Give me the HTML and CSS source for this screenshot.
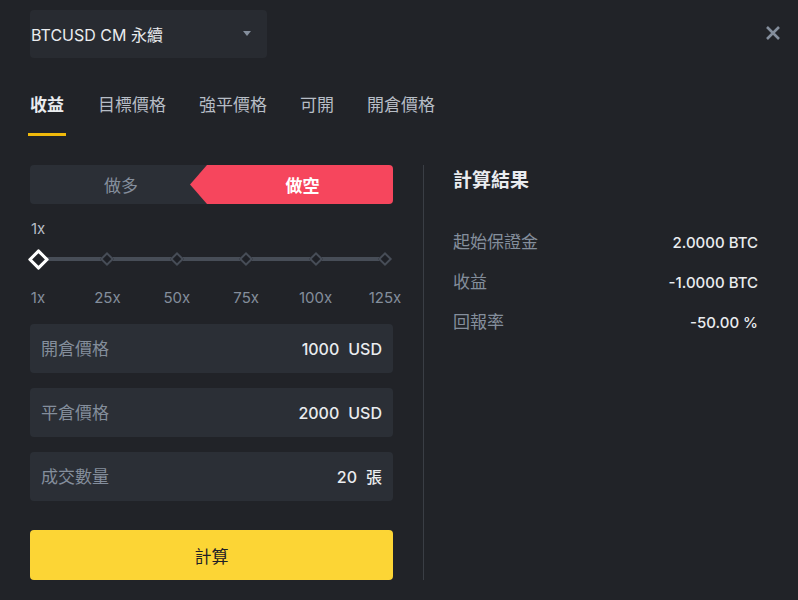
FILE: index.html
```html
<!DOCTYPE html>
<html lang="zh-Hant">

<head>
  <meta charset="UTF-8">
  <title>合約計算器</title>
  <link rel="stylesheet" href="styles.css">
</head>

<body>
  <div class="calc">
    <div class="header">
      <div class="symbol">
        <span>BTCUSD CM 永續</span>
        <span class="caret"></span>
      </div>
      <svg class="close" width="16" height="16" viewBox="0 0 16 16">
        <path d="M2 2L14 14M14 2L2 14" stroke="#848e9c" stroke-width="2.6" stroke-linecap="butt" />
      </svg>
    </div>

    <div class="tabs">
      <div class="tab active">收益</div>
      <div class="tab">目標價格</div>
      <div class="tab">強平價格</div>
      <div class="tab">可開</div>
      <div class="tab">開倉價格</div>
    </div>

    <div class="main">
      <div class="form">
        <div class="side">
          <div class="side-btn long">做多</div>
          <div class="side-btn short">做空</div>
        </div>

        <div class="lev-value">1x</div>
        <div class="slider">
          <span class="dot current"></span>
          <span class="dot"></span>
          <span class="dot"></span>
          <span class="dot"></span>
          <span class="dot"></span>
          <span class="dot"></span>
        </div>
        <div class="marks">
          <span>1x</span>
          <span>25x</span>
          <span>50x</span>
          <span>75x</span>
          <span>100x</span>
          <span>125x</span>
        </div>

        <div class="field">
          <span class="field-label">開倉價格</span>
          <span class="field-value">1000<span class="unit">USD</span></span>
        </div>
        <div class="field">
          <span class="field-label">平倉價格</span>
          <span class="field-value">2000<span class="unit">USD</span></span>
        </div>
        <div class="field">
          <span class="field-label">成交數量</span>
          <span class="field-value">20<span class="unit">張</span></span>
        </div>

        <button class="submit">計算</button>
      </div>

      <div class="divider"></div>

      <div class="result">
        <div class="result-title">計算結果</div>
        <div class="row">
          <span class="row-label">起始保證金</span>
          <span class="row-value">2.0000 BTC</span>
        </div>
        <div class="row">
          <span class="row-label">收益</span>
          <span class="row-value">-1.0000 BTC</span>
        </div>
        <div class="row">
          <span class="row-label">回報率</span>
          <span class="row-value">-50.00 %</span>
        </div>
      </div>
    </div>
  </div>
</body>

</html>
```

FILE: styles.css
```css
body {
  margin: 0;
  background: #212328;
  color: #eaecef;
  font-family: "Inter", "Noto Sans CJK TC", sans-serif;
  font-size: 16px;
}

.calc {
  padding: 10px 17px 0 30px;
}

.header {
  display: flex;
  justify-content: space-between;
  align-items: center;
}

.symbol {
  width: 237px;
  height: 48px;
  box-sizing: border-box;
  display: flex;
  align-items: center;
  justify-content: space-between;
  padding: 0 16px 0 1px;
  background: #282b31;
  border-radius: 4px;
  font-size: 16px;
  color: #eaecef;
}

.caret {
  width: 0;
  height: 0;
  border-left: 4px solid transparent;
  border-right: 4px solid transparent;
  border-top: 5px solid #848e9c;
  margin-top: -2px;
}

.close {
  margin-top: -2px;
}

.tabs {
  display: flex;
  gap: 33px;
  margin-top: 30px;
}

.tab {
  padding: 5px 0 16px;
  color: #b7bdc6;
  font-size: 17px;
  line-height: 24px;
  border-bottom: 3px solid transparent;
}

.tab.active {
  color: #eaecef;
  font-weight: 700;
  border-bottom-color: #f0b90b;
  margin: 0 -1px 0 -2px;
  padding-left: 2px;
  padding-right: 2px;
}

.main {
  display: flex;
  margin-top: 29px;
}

.form {
  width: 363px;
}

.side {
  display: flex;
  height: 39px;
}

.side-btn {
  display: flex;
  align-items: center;
  justify-content: center;
  font-size: 17px;
}

.long {
  flex: 0 0 182px;
  background: #2b2f36;
  color: #848e9c;
  border-radius: 4px 0 0 4px;
}

.short {
  flex: 1;
  margin-left: -22px;
  padding-left: 22px;
  background: #f6465d;
  color: #fff;
  font-weight: 700;
  border-radius: 0 4px 4px 0;
  clip-path: polygon(0 50%, 17px 0, 100% 0, 100% 100%, 17px 100%);
}

.lev-value {
  margin-top: 15px;
  padding-left: 1px;
  font-size: 15px;
  color: #b7bdc6;
  line-height: 20px;
}

.slider {
  display: flex;
  justify-content: space-between;
  align-items: center;
  height: 20px;
  margin-top: 10px;
  background: linear-gradient(#474d57, #474d57) center / calc(100% - 16px) 4px no-repeat;
}

.dot {
  width: 16px;
  height: 16px;
  display: flex;
  align-items: center;
  justify-content: center;
}

.dot::after {
  content: "";
  width: 6px;
  height: 6px;
  background: #1e2026;
  border: 2px solid #474d57;
  transform: rotate(45deg);
}

.dot.current::after {
  width: 9px;
  height: 9px;
  border: 3px solid #fff;
  background: #212328;
  border-radius: 1px;
}

.marks {
  display: flex;
  justify-content: space-between;
  margin-top: 19px;
  font-size: 15px;
  color: #848e9c;
  line-height: 20px;
}

.marks span {
  width: 16px;
  display: flex;
  justify-content: center;
  white-space: nowrap;
}

.field {
  display: flex;
  justify-content: space-between;
  align-items: center;
  height: 49px;
  margin-top: 15px;
  padding: 0 11px;
  background: #2b2f36;
  border-radius: 4px;
  line-height: 24px;
}

.marks + .field {
  margin-top: 16px;
}

.field-label {
  color: #848e9c;
  font-size: 17px;
}

.field-value {
  color: #eaecef;
  font-weight: 500;
}

.unit {
  margin-left: 9px;
}

.submit {
  display: block;
  width: 100%;
  height: 50px;
  margin-top: 29px;
  border: none;
  border-radius: 4px;
  background: #fcd535;
  color: #1e2026;
  font-family: inherit;
  font-size: 17px;
}

.divider {
  width: 1px;
  margin: 0 29px 0 30px;
  background: #3a3e45;
}

.result {
  width: 305px;
}

.result-title {
  font-size: 19px;
  font-weight: 700;
  line-height: 24px;
  margin-top: 4px;
}

.row {
  display: flex;
  justify-content: space-between;
  align-items: baseline;
  line-height: 24px;
  margin-top: 15px;
}

.result-title + .row {
  margin-top: 37px;
}

.row-label {
  color: #848e9c;
  font-size: 17px;
}

.row-value {
  color: #eaecef;
  font-size: 15px;
  font-weight: 500;
}
```
